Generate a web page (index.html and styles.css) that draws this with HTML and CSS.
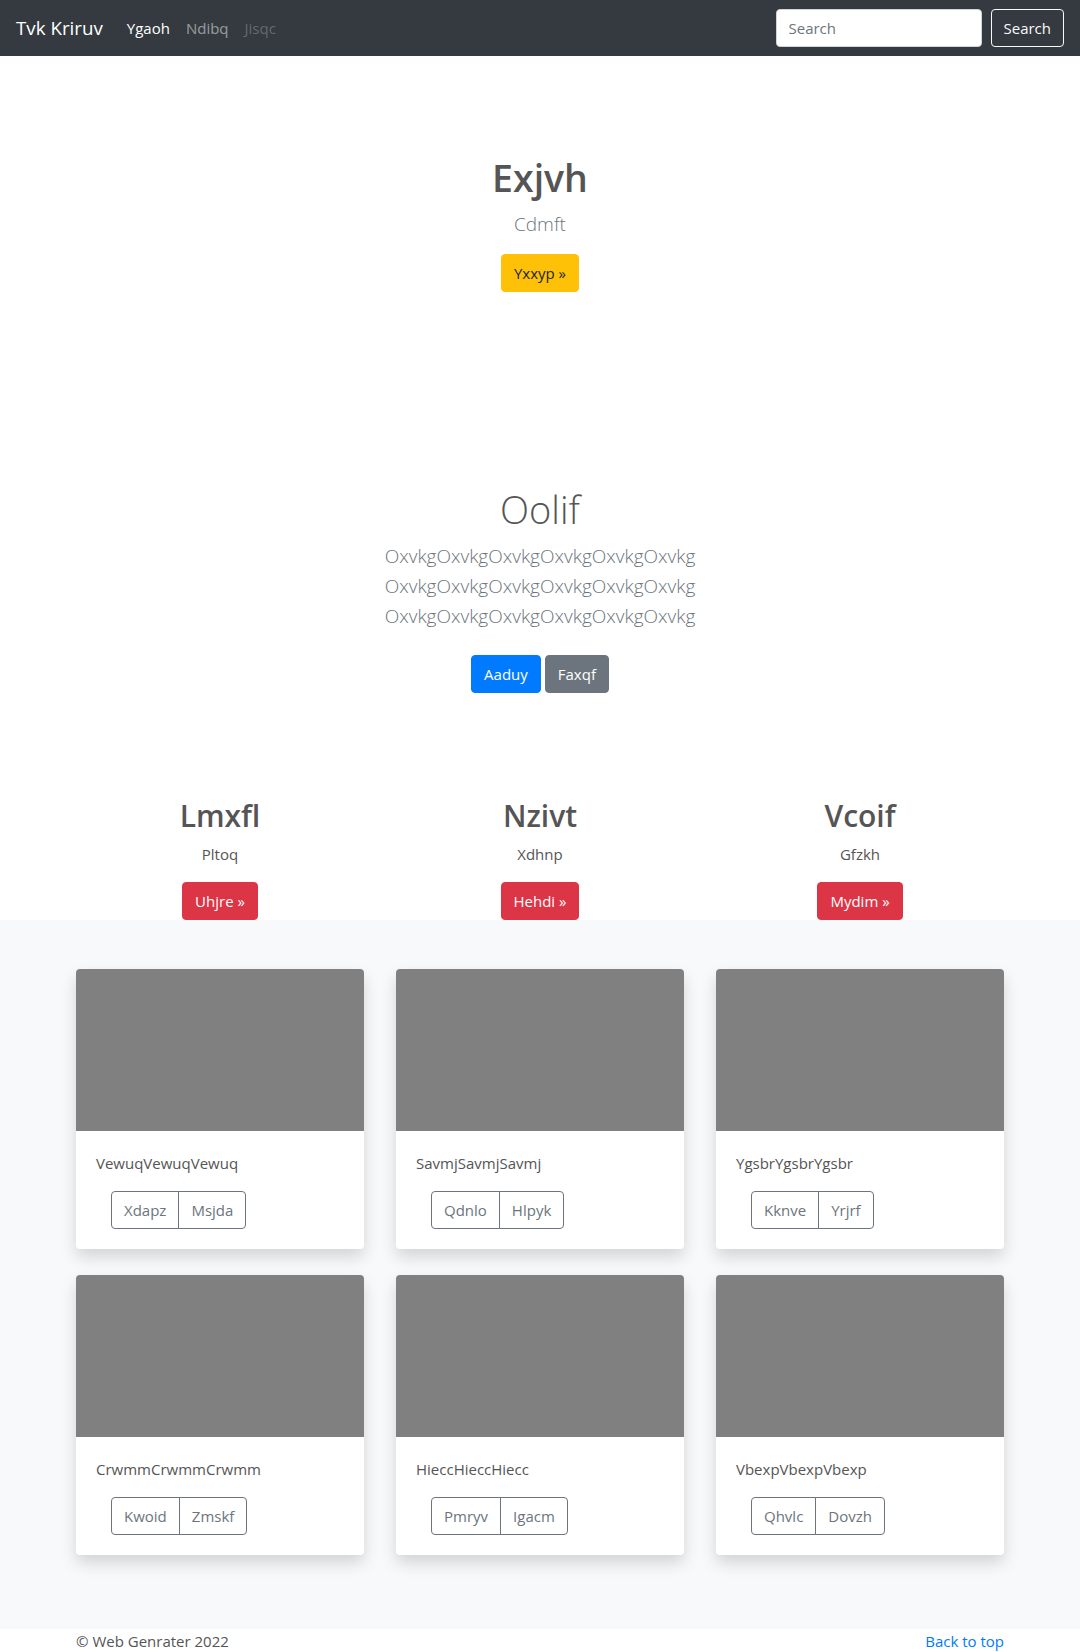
FILE: index.html
```html
<!DOCTYPE html>
<html lang="en">
<head>
<meta charset="utf-8">
<title>Tvk Kriruv</title>
<link rel="stylesheet" href="styles.css">
</head>
<body>
<header class="navbar">
  <a class="brand" href="#">Tvk Kriruv</a>
  <nav class="nav">
    <a class="nav-link active" href="#">Ygaoh</a>
    <a class="nav-link" href="#">Ndibq</a>
    <a class="nav-link disabled" href="#">Jisqc</a>
  </nav>
  <form class="search">
    <input class="search-input" type="text" placeholder="Search">
    <button class="btn btn-outline-light" type="button">Search</button>
  </form>
</header>

<main>
  <section class="hero">
    <h1 class="hero-title">Exjvh</h1>
    <p class="lead hero-lead">Cdmft</p>
    <a class="btn btn-warning" href="#">Yxxyp &raquo;</a>
  </section>

  <section class="intro">
    <h1 class="intro-title">Oolif</h1>
    <p class="lead intro-lead">OxvkgOxvkgOxvkgOxvkgOxvkgOxvkg<br>OxvkgOxvkgOxvkgOxvkgOxvkgOxvkg<br>OxvkgOxvkgOxvkgOxvkgOxvkgOxvkg</p>
    <div class="intro-actions">
      <a class="btn btn-primary" href="#">Aaduy</a>
      <a class="btn btn-secondary" href="#">Faxqf</a>
    </div>
  </section>

  <section class="features">
    <div class="feature">
      <h2 class="feature-title">Lmxfl</h2>
      <p class="feature-text">Pltoq</p>
      <a class="btn btn-danger" href="#">Uhjre &raquo;</a>
    </div>
    <div class="feature">
      <h2 class="feature-title">Nzivt</h2>
      <p class="feature-text">Xdhnp</p>
      <a class="btn btn-danger" href="#">Hehdi &raquo;</a>
    </div>
    <div class="feature">
      <h2 class="feature-title">Vcoif</h2>
      <p class="feature-text">Gfzkh</p>
      <a class="btn btn-danger" href="#">Mydim &raquo;</a>
    </div>
  </section>

  <section class="album">
    <div class="album-grid">
      <div class="card">
        <div class="card-img"></div>
        <div class="card-body">
          <p class="card-text">VewuqVewuqVewuq</p>
          <div class="btn-group"><a class="btn btn-outline-secondary" href="#">Xdapz</a><a class="btn btn-outline-secondary" href="#">Msjda</a></div>
        </div>
      </div>
      <div class="card">
        <div class="card-img"></div>
        <div class="card-body">
          <p class="card-text">SavmjSavmjSavmj</p>
          <div class="btn-group"><a class="btn btn-outline-secondary" href="#">Qdnlo</a><a class="btn btn-outline-secondary" href="#">Hlpyk</a></div>
        </div>
      </div>
      <div class="card">
        <div class="card-img"></div>
        <div class="card-body">
          <p class="card-text">YgsbrYgsbrYgsbr</p>
          <div class="btn-group"><a class="btn btn-outline-secondary" href="#">Kknve</a><a class="btn btn-outline-secondary" href="#">Yrjrf</a></div>
        </div>
      </div>
      <div class="card">
        <div class="card-img"></div>
        <div class="card-body">
          <p class="card-text">CrwmmCrwmmCrwmm</p>
          <div class="btn-group"><a class="btn btn-outline-secondary" href="#">Kwoid</a><a class="btn btn-outline-secondary" href="#">Zmskf</a></div>
        </div>
      </div>
      <div class="card">
        <div class="card-img"></div>
        <div class="card-body">
          <p class="card-text">HieccHieccHiecc</p>
          <div class="btn-group"><a class="btn btn-outline-secondary" href="#">Pmryv</a><a class="btn btn-outline-secondary" href="#">Igacm</a></div>
        </div>
      </div>
      <div class="card">
        <div class="card-img"></div>
        <div class="card-body">
          <p class="card-text">VbexpVbexpVbexp</p>
          <div class="btn-group"><a class="btn btn-outline-secondary" href="#">Qhvlc</a><a class="btn btn-outline-secondary" href="#">Dovzh</a></div>
        </div>
      </div>
    </div>
  </section>
</main>

<footer class="footer">
  <p class="footer-copy">&copy; Web Genrater 2022</p>
  <a class="footer-link" href="#">Back to top</a>
</footer>
</body>
</html>
```

FILE: styles.css
```css
* { box-sizing: border-box; }

html, body {
  margin: 0;
  padding: 0;
}

body {
  font-family: "Segoe UI", "Open Sans", "Liberation Sans", sans-serif;
  font-size: 15px;
  line-height: 24px;
  color: #555;
  background: #fff;
}

a { text-decoration: none; }

h1, h2, p { margin: 0; }

/* Navbar */
.navbar {
  display: flex;
  align-items: center;
  height: 56px;
  padding: 8px 16px;
  background: #343a40;
}

.brand {
  font-size: 18.75px;
  line-height: 30px;
  padding: 5px 0;
  margin-right: 16px;
  color: #fff;
}

.nav {
  display: flex;
  flex: 1;
}

.nav-link {
  padding: 8px;
  font-size: 15px;
  line-height: 24px;
  color: rgba(255, 255, 255, 0.5);
}

.nav-link.active { color: #fff; }
.nav-link.disabled { color: rgba(255, 255, 255, 0.25); }

.search {
  display: flex;
  align-items: center;
}

.search-input {
  width: 206px;
  height: 38px;
  padding: 6px 12px;
  margin-right: 9px;
  font: inherit;
  font-size: 15px;
  color: #495057;
  background: #fff;
  border: 1px solid #ced4da;
  border-radius: 4px;
  outline: none;
}

.search-input::placeholder { color: #6c757d; }

/* Buttons */
.btn {
  display: inline-block;
  font-family: inherit;
  font-size: 15px;
  line-height: 24px;
  padding: 6px 12px;
  border: 1px solid transparent;
  border-radius: 4px;
  background: transparent;
  cursor: pointer;
  vertical-align: middle;
}

.btn-outline-light { color: #f8f9fa; border-color: #f8f9fa; }
.btn-warning { color: #212529; background: #ffc107; border-color: #ffc107; }
.btn-primary { color: #fff; background: #007bff; border-color: #007bff; }
.btn-secondary { color: #fff; background: #6c757d; border-color: #6c757d; }
.btn-danger { color: #fff; background: #dc3545; border-color: #dc3545; }
.btn-outline-secondary { color: #6c757d; border-color: #6c757d; }

/* Hero */
.hero {
  text-align: center;
  padding: 98px 0 96px;
}

.hero-title {
  font-size: 37.5px;
  line-height: 48px;
  font-weight: 600;
  color: #555;
  margin-bottom: 7px;
}

.lead {
  font-size: 19px;
  line-height: 30px;
  font-weight: 300;
  color: #6c757d;
}

.hero-lead { margin-bottom: 15px; }

/* Intro */
.intro {
  text-align: center;
  padding: 97px 0 0;
}

.intro-title {
  font-size: 38px;
  line-height: 48px;
  font-weight: 300;
  color: #555;
  margin-bottom: 8px;
}

.intro-lead { margin-bottom: 24px; }

.intro-actions {
  display: flex;
  justify-content: center;
  gap: 4px;
  margin: 8px 0;
}

/* Features */
.features {
  display: grid;
  grid-template-columns: repeat(3, 1fr);
  width: 960px;
  margin: 0 auto;
  padding-top: 96px;
  text-align: center;
}

.feature-title {
  font-size: 30px;
  line-height: 38px;
  font-weight: 600;
  color: #555;
  margin-bottom: 7px;
}

.feature-text {
  color: #555;
  margin-bottom: 16px;
}

/* Album */
.album {
  background: #f8f9fa;
  padding: 49px 0 74px;
}

.album-grid {
  display: grid;
  grid-template-columns: repeat(3, 288px);
  column-gap: 32px;
  row-gap: 26px;
  width: 928px;
  margin: 0 auto;
}

.card {
  background: #fff;
  border-radius: 4px;
  overflow: hidden;
  box-shadow: 0 8px 16px rgba(0, 0, 0, 0.15);
}

.card-img {
  height: 162px;
  background: #808080;
}

.card-body {
  padding: 20px;
}

.card-text {
  color: #555;
  margin-bottom: 16px;
}

.btn-group {
  display: inline-flex;
  margin-left: 15px;
}

.btn-group .btn:first-child {
  border-top-right-radius: 0;
  border-bottom-right-radius: 0;
}

.btn-group .btn:last-child {
  margin-left: -1px;
  border-top-left-radius: 0;
  border-bottom-left-radius: 0;
}

/* Footer */
.footer {
  display: flex;
  justify-content: space-between;
  width: 928px;
  margin: 0 auto;
  padding-top: 0;
}

.footer-copy { color: #555; }

.footer-link { color: #007bff; }
```
